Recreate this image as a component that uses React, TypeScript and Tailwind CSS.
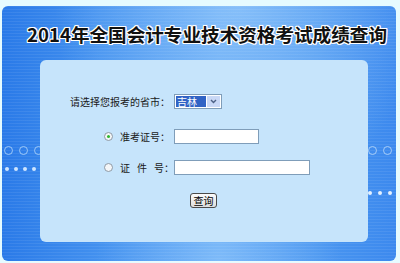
import { useState } from 'react';

const cjk = "font-['Noto_Sans_CJK_SC','Noto_Sans',sans-serif]";

function Radio({ checked, onClick }: { checked: boolean; onClick: () => void }) {
  return (
    <span
      onClick={onClick}
      className="flex items-center justify-center w-[9px] h-[9px] rounded-full border border-[#8e9aa6] bg-[#f4f6f8] mr-[7px] cursor-pointer"
    >
      {checked && <span className="w-[3px] h-[3px] rounded-full bg-[#2fb62f]" />}
    </span>
  );
}

export default function App() {
  const [mode, setMode] = useState<'ticket' | 'id'>('ticket');

  return (
    <div className={`w-[400px] h-[263px] bg-[#e6fbff] pt-[6px] pl-[2px] ${cjk}`}>
      <div className="relative w-[394px] h-[255px] rounded-[6px] overflow-hidden bg-[repeating-linear-gradient(to_bottom,rgba(255,255,255,0.07)_0_1px,transparent_1px_3px),radial-gradient(ellipse_at_60%_0%,rgba(170,215,255,0.55),transparent_55%),radial-gradient(ellipse_at_55%_100%,rgba(160,210,255,0.5),transparent_40%),linear-gradient(to_right,#2a7ae8,#4391ef_25%,#5aa2f3_55%,#4a96f0_80%,#3c89ee)]">
        {/* 装飾の丸 */}
        <div className="absolute left-[2px] top-[140px] flex gap-[6px]">
          <span className="w-[9px] h-[9px] rounded-full border border-[#9cc8f8]" />
          <span className="w-[9px] h-[9px] rounded-full border border-[#9cc8f8]" />
          <span className="w-[9px] h-[9px] rounded-full border border-[#9cc8f8]" />
        </div>
        <div className="absolute left-[3px] top-[161px] flex gap-[5px]">
          <span className="w-[4px] h-[4px] rounded-full bg-[#cfe6ff]" />
          <span className="w-[4px] h-[4px] rounded-full bg-[#cfe6ff]" />
          <span className="w-[4px] h-[4px] rounded-full bg-[#cfe6ff]" />
          <span className="w-[4px] h-[4px] rounded-full bg-[#cfe6ff]" />
        </div>
        <div className="absolute left-[366px] top-[140px] flex gap-[6px]">
          <span className="w-[9px] h-[9px] rounded-full border border-[#a6cdf8]" />
          <span className="w-[9px] h-[9px] rounded-full border border-[#a6cdf8]" />
        </div>
        <div className="absolute left-[366px] top-[185px] flex gap-[6px]">
          <span className="w-[4px] h-[4px] rounded-full bg-[#e4f1ff]" />
          <span className="w-[4px] h-[4px] rounded-full bg-[#e4f1ff]" />
          <span className="w-[4px] h-[4px] rounded-full bg-[#e4f1ff]" />
          <span className="w-[4px] h-[4px] rounded-full bg-[#e4f1ff]" />
        </div>

        <div className="h-[54px] pl-[25px] pt-[2px] flex items-center">
          <h1 className="text-[18.6px] leading-none font-bold whitespace-nowrap text-[#111] [text-shadow:1px_0_0_#fff,-1px_0_0_#fff,0_1px_0_#fff,0_-1px_0_#fff,1px_1px_0_#fff,-1px_-1px_0_#fff,1px_-1px_0_#fff,-1px_1px_0_#fff]">
            2014年全国会计专业技术资格考试成绩查询
          </h1>
        </div>

        <div className="relative ml-[38px] w-[328px] h-[182px] rounded-[6px] bg-[#c6e4fb] pt-[34px] text-[10px] leading-none text-[#1a1a1a] whitespace-nowrap">
          <div className="grid grid-cols-[134px_auto] items-center">
            <div className="flex justify-end pr-[4px] h-[15px] items-center">请选择您报考的省市：</div>
            <div className="flex w-[48px] h-[15px] border border-[#7f9db9] bg-white p-[1px]">
              <div className="flex-1 bg-[#3163c5] text-white flex items-center pl-[1px]">吉林</div>
              <div className="w-[13px] ml-[1px] bg-[#c9d8f6] flex items-center justify-center">
                <svg width="7" height="5" viewBox="0 0 7 5">
                  <path d="M1 1 L3.5 3.5 L6 1" fill="none" stroke="#4d6185" strokeWidth="1.4" />
                </svg>
              </div>
            </div>

            <div className="col-span-2 h-[20px]" />

            <div className="flex justify-end pr-[4px] h-[15px] items-center">
              <Radio checked={mode === 'ticket'} onClick={() => setMode('ticket')} />
              <span className="w-[50px]">准考证号：</span>
            </div>
            <input className="w-[85px] h-[15px] border border-[#7f9db9] bg-white outline-none" />

            <div className="col-span-2 h-[16px]" />

            <div className="flex justify-end pr-[4px] h-[15px] items-center">
              <Radio checked={mode === 'id'} onClick={() => setMode('id')} />
              <span className="w-[50px] flex">
                <span className="mr-[7px]">证</span>
                <span className="mr-[7px]">件</span>
                <span>号：</span>
              </span>
            </div>
            <input className="w-[136px] h-[15px] border border-[#7f9db9] bg-white outline-none" />
          </div>

          <div className="flex pl-[150px] mt-[18px]">
            <button className="w-[27px] h-[15px] rounded-[3px] border border-[#4a4a4a] bg-[linear-gradient(to_bottom,#fbfbfb,#dedede)] text-[10px] leading-none text-black flex items-center justify-center">
              查询
            </button>
          </div>
        </div>
      </div>
    </div>
  );
}
